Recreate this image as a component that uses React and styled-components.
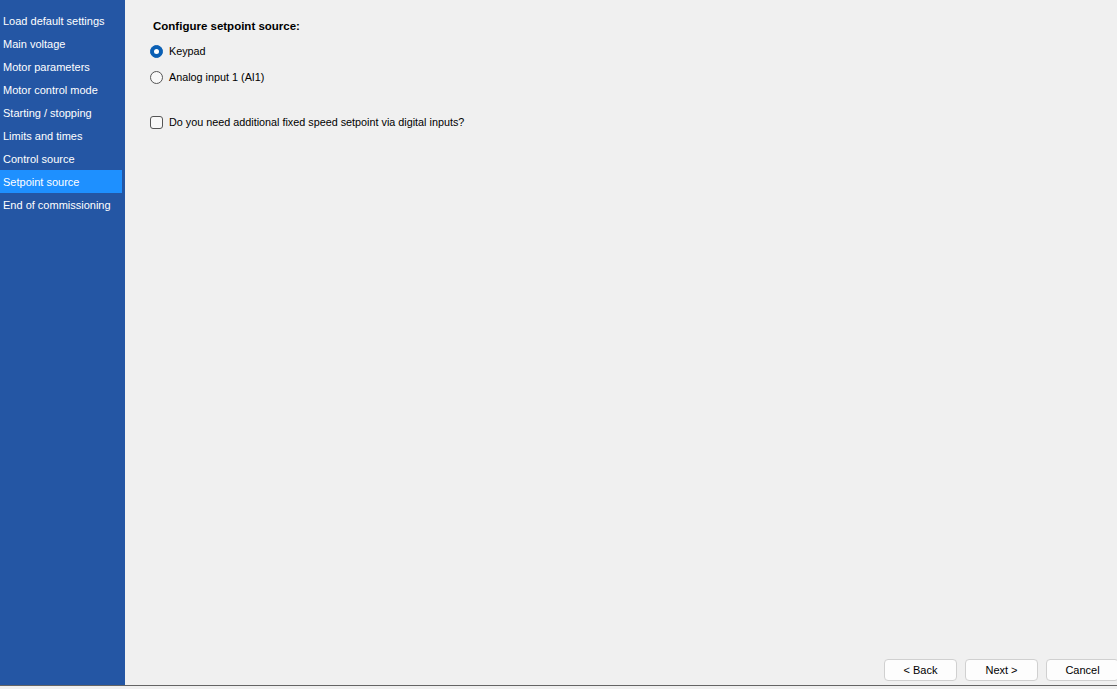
import React, { useState } from "react";
import styled, { createGlobalStyle } from "styled-components";

const Global = createGlobalStyle`
  html, body { margin: 0; padding: 0; background: #f0f0f0; }
  body { font-family: "Liberation Sans", Arial, sans-serif; }
  * { box-sizing: border-box; }
`;

const Window = styled.div`
  width: 1117px;
  height: 689px;
  display: flex;
  flex-direction: column;
  background: #f0f0f0;
  overflow: hidden;
`;

const Body = styled.div`
  flex: 0 0 685px;
  display: flex;
`;

const BottomLine = styled.div`
  flex: 0 0 1px;
  background: #646464;
`;

const Sidebar = styled.nav`
  width: 125px;
  background: #2456a4;
  padding-top: 9px;
  display: flex;
  flex-direction: column;
`;

const NavItem = styled.div`
  width: 122px;
  height: 23px;
  line-height: 25px;
  padding-left: 3px;
  font-size: 11px;
  color: #ffffff;
  white-space: nowrap;
  background: ${(p) => (p.$active ? "#1e90ff" : "transparent")};
`;

const Main = styled.main`
  flex: 1;
  display: flex;
  flex-direction: column;
  padding: 17px 0 4px 25px;
`;

const Heading = styled.div`
  font-size: 11.5px;
  font-weight: 700;
  color: #000;
  margin-left: 3px;
  height: 18px;
  line-height: 19px;
`;

const Options = styled.div`
  display: flex;
  flex-direction: column;
  gap: 6px;
  margin-top: 6px;
`;

const OptionRow = styled.label`
  display: flex;
  align-items: center;
  gap: 6px;
  height: 20px;
  font-size: 10.8px;
  color: #000;
  cursor: default;
`;

const RadioCircle = styled.span`
  width: 13px;
  height: 13px;
  border-radius: 50%;
  display: inline-flex;
  align-items: center;
  justify-content: center;
  ${(p) =>
    p.$checked
      ? `background: #0a5fb4; border: 1px solid #0a5fb4;`
      : `background: #f8f8f8; border: 1px solid #555;`}
`;

const RadioDot = styled.span`
  width: 5px;
  height: 5px;
  border-radius: 50%;
  background: #fff;
`;

const CheckBox = styled.span`
  width: 13px;
  height: 13px;
  border-radius: 3px;
  border: 1px solid #555;
  background: #f8f8f8;
`;

const CheckRow = styled(OptionRow)`
  margin-top: 25px;
`;

const Spacer = styled.div`
  flex: 1;
`;

const ButtonBar = styled.div`
  display: flex;
  justify-content: flex-end;
  gap: 8px;
  margin-right: -2px;
`;

const Button = styled.button`
  width: 73px;
  height: 22px;
  border: 1px solid #d0d0d0;
  border-radius: 4px;
  background: #fdfdfd;
  font-family: inherit;
  font-size: 11px;
  line-height: 20px;
  color: #000;
  padding: 0;
`;

const items = [
  "Load default settings",
  "Main voltage",
  "Motor parameters",
  "Motor control mode",
  "Starting / stopping",
  "Limits and times",
  "Control source",
  "Setpoint source",
  "End of commissioning",
];

export default function App() {
  const [sel, setSel] = useState(0);
  return (
    <>
      <Global />
      <Window>
        <Body>
          <Sidebar>
            {items.map((t) => (
              <NavItem key={t} $active={t === "Setpoint source"}>
                {t}
              </NavItem>
            ))}
          </Sidebar>
          <Main>
            <Heading>Configure setpoint source:</Heading>
            <Options>
              <OptionRow onClick={() => setSel(0)}>
                <RadioCircle $checked={sel === 0}>{sel === 0 && <RadioDot />}</RadioCircle>
                Keypad
              </OptionRow>
              <OptionRow onClick={() => setSel(1)}>
                <RadioCircle $checked={sel === 1}>{sel === 1 && <RadioDot />}</RadioCircle>
                Analog input 1 (AI1)
              </OptionRow>
            </Options>
            <CheckRow>
              <CheckBox />
              Do you need additional fixed speed setpoint via digital inputs?
            </CheckRow>
            <Spacer />
            <ButtonBar>
              <Button>&lt; Back</Button>
              <Button>Next &gt;</Button>
              <Button>Cancel</Button>
            </ButtonBar>
          </Main>
        </Body>
        <BottomLine />
      </Window>
    </>
  );
}
